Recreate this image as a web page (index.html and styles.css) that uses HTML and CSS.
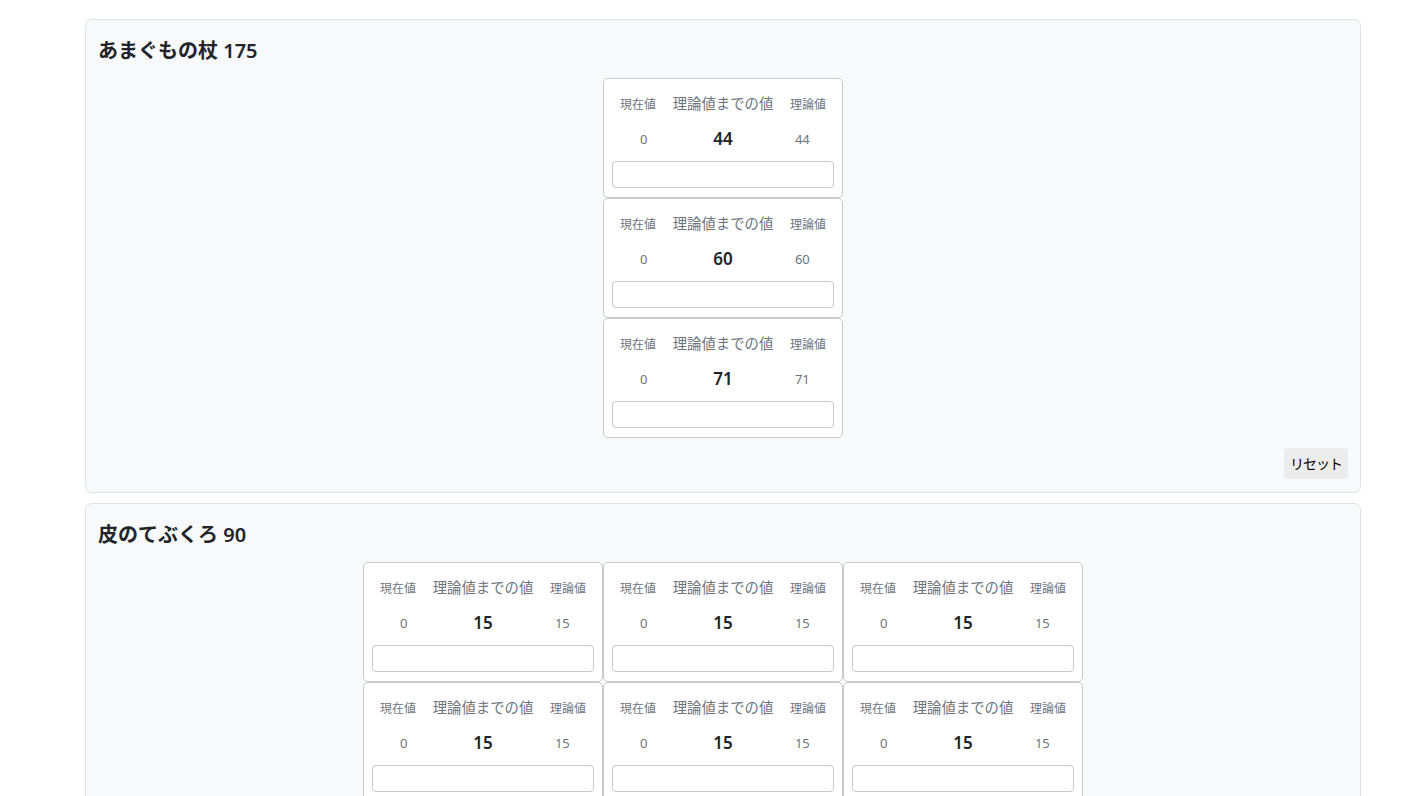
FILE: index.html
```html
<!DOCTYPE html>
<html lang="ja">
<head>
<meta charset="utf-8">
<title>理論値計算</title>
<link rel="stylesheet" href="styles.css">
</head>
<body>
<main class="page">
  <section class="panel">
    <h2 class="panel-title">あまぐもの杖 175</h2>
    <div class="grid grid-1">
      <div class="stat">
        <div class="labels"><span class="lbl">現在値</span><span class="lbl lbl-main">理論値までの値</span><span class="lbl">理論値</span></div>
        <div class="values"><span class="val">0</span><span class="val val-main">44</span><span class="val">44</span></div>
        <input class="stat-input" type="text">
      </div>
      <div class="stat">
        <div class="labels"><span class="lbl">現在値</span><span class="lbl lbl-main">理論値までの値</span><span class="lbl">理論値</span></div>
        <div class="values"><span class="val">0</span><span class="val val-main">60</span><span class="val">60</span></div>
        <input class="stat-input" type="text">
      </div>
      <div class="stat">
        <div class="labels"><span class="lbl">現在値</span><span class="lbl lbl-main">理論値までの値</span><span class="lbl">理論値</span></div>
        <div class="values"><span class="val">0</span><span class="val val-main">71</span><span class="val">71</span></div>
        <input class="stat-input" type="text">
      </div>
    </div>
    <div class="actions"><button class="reset" type="button">リセット</button></div>
  </section>

  <section class="panel">
    <h2 class="panel-title">皮のてぶくろ 90</h2>
    <div class="grid grid-3">
      <div class="stat">
        <div class="labels"><span class="lbl">現在値</span><span class="lbl lbl-main">理論値までの値</span><span class="lbl">理論値</span></div>
        <div class="values"><span class="val">0</span><span class="val val-main">15</span><span class="val">15</span></div>
        <input class="stat-input" type="text">
      </div>
      <div class="stat">
        <div class="labels"><span class="lbl">現在値</span><span class="lbl lbl-main">理論値までの値</span><span class="lbl">理論値</span></div>
        <div class="values"><span class="val">0</span><span class="val val-main">15</span><span class="val">15</span></div>
        <input class="stat-input" type="text">
      </div>
      <div class="stat">
        <div class="labels"><span class="lbl">現在値</span><span class="lbl lbl-main">理論値までの値</span><span class="lbl">理論値</span></div>
        <div class="values"><span class="val">0</span><span class="val val-main">15</span><span class="val">15</span></div>
        <input class="stat-input" type="text">
      </div>
      <div class="stat">
        <div class="labels"><span class="lbl">現在値</span><span class="lbl lbl-main">理論値までの値</span><span class="lbl">理論値</span></div>
        <div class="values"><span class="val">0</span><span class="val val-main">15</span><span class="val">15</span></div>
        <input class="stat-input" type="text">
      </div>
      <div class="stat">
        <div class="labels"><span class="lbl">現在値</span><span class="lbl lbl-main">理論値までの値</span><span class="lbl">理論値</span></div>
        <div class="values"><span class="val">0</span><span class="val val-main">15</span><span class="val">15</span></div>
        <input class="stat-input" type="text">
      </div>
      <div class="stat">
        <div class="labels"><span class="lbl">現在値</span><span class="lbl lbl-main">理論値までの値</span><span class="lbl">理論値</span></div>
        <div class="values"><span class="val">0</span><span class="val val-main">15</span><span class="val">15</span></div>
        <input class="stat-input" type="text">
      </div>
    </div>
    <div class="actions"><button class="reset" type="button">リセット</button></div>
  </section>
</main>
</body>
</html>
```

FILE: styles.css
```css
* { box-sizing: border-box; }

html, body {
  margin: 0;
  padding: 0;
  background: #ffffff;
  color: #212529;
  font-family: "Noto Sans", "Noto Sans CJK JP", sans-serif;
}

.page {
  width: 1276px;
  margin-left: 85px;
  padding-top: 19px;
  display: flex;
  flex-direction: column;
  gap: 10px;
}

.panel {
  background: #f8f9fa;
  border: 1px solid #dee2e6;
  border-radius: 7px;
  padding: 16px 12px 13px;
}

.panel-title {
  margin: 0 0 12px;
  font-size: 20px;
  line-height: 30px;
  font-weight: 600;
  font-family: "Noto Sans", "Noto Sans CJK JP", sans-serif;
  color: #212529;
}

.grid {
  display: grid;
  justify-content: center;
}
.grid-1 { grid-template-columns: 240px; }
.grid-3 { grid-template-columns: repeat(3, 240px); }

.stat {
  background: #ffffff;
  border: 1px solid #c9c9c9;
  border-radius: 5px;
  height: 120px;
  padding: 16px 0 9px;
  display: flex;
  flex-direction: column;
}

.labels {
  display: flex;
  justify-content: space-between;
  align-items: baseline;
  padding: 0 16px;
  height: 16px;
  color: #6c757d;
}
.lbl {
  font-size: 12px;
  line-height: 18px;
  white-space: nowrap;
}
.lbl-main {
  font-size: 14.4px;
}

.values {
  display: grid;
  grid-template-columns: repeat(3, 1fr);
  margin-top: 16px;
  height: 24px;
  align-items: center;
  text-align: center;
}
.val {
  font-size: 13px;
  line-height: 24px;
  color: #6c757d;
}
.val-main {
  font-size: 17px;
  font-weight: 600;
  color: #212529;
}

.stat-input {
  display: block;
  margin: 10px 8px 0;
  width: calc(100% - 16px);
  height: 27px;
  border: 1px solid #c9c9c9;
  border-radius: 4px;
  background: #fff;
  padding: 0 8px;
  font: inherit;
  font-size: 14px;
}

.actions {
  display: flex;
  justify-content: flex-end;
  margin-top: 10px;
}

.reset {
  height: 31px;
  padding: 0 6px;
  border: none;
  border-radius: 4px;
  background: #ececec;
  color: #000;
  font-family: "Noto Sans CJK JP", sans-serif;
  font-size: 14px;
  letter-spacing: -1px;
  line-height: 31px;
}
```
